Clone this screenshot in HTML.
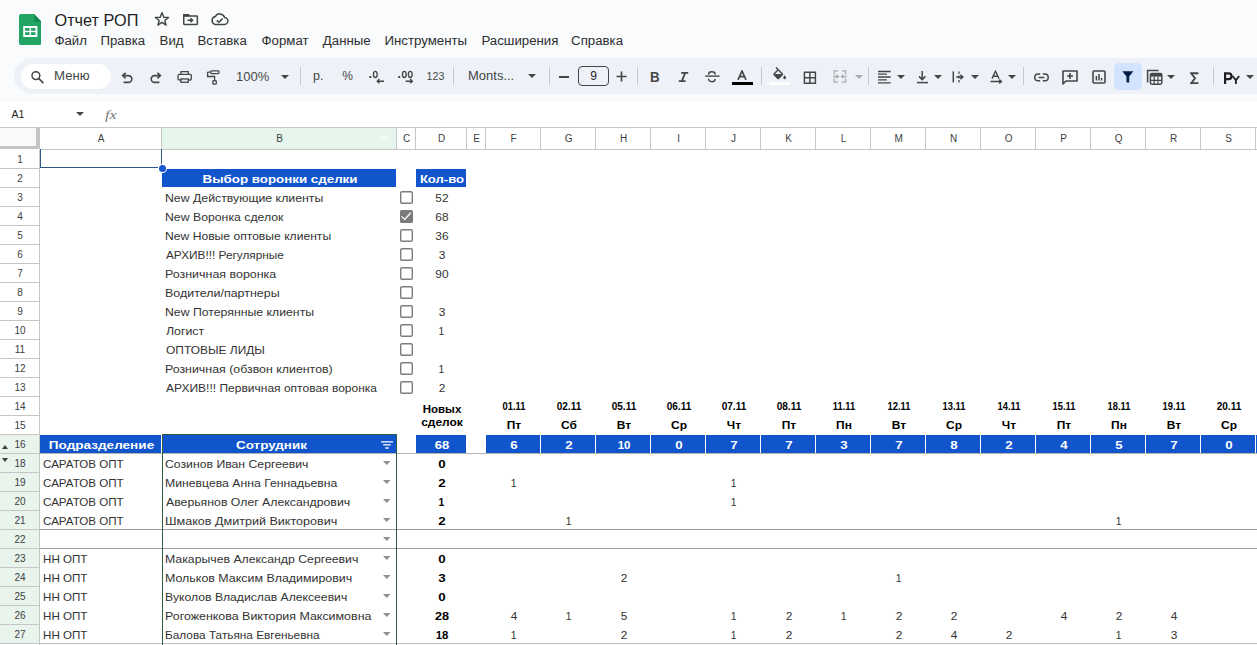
<!DOCTYPE html>
<html><head><meta charset="utf-8"><title>Отчет РОП</title>
<style>
html,body{margin:0;padding:0;}
body{width:1257px;height:645px;overflow:hidden;position:relative;background:#fff;font-family:"Liberation Sans", sans-serif;}
body>div,body>svg{position:absolute;}
.t{white-space:nowrap;}
</style></head><body>
<div style="left:0px;top:0px;width:1257px;height:102px;background:#f9fbfd;"></div>
<svg style="left:18.8px;top:14px" width="22.6" height="31" viewBox="0 0 24 31" preserveAspectRatio="none">
<path d="M2 0 H16 L24 8 V29 A2 2 0 0 1 22 31 H2 A2 2 0 0 1 0 29 V2 A2 2 0 0 1 2 0Z" fill="#21a464"/>
<path d="M16 0 L24 8 H17.5 A1.5 1.5 0 0 1 16 6.5Z" fill="#168a4e"/>
<rect x="4.5" y="12" width="15" height="11" fill="#fff"/>
<rect x="6.5" y="14" width="4.8" height="2.8" fill="#23a566"/>
<rect x="12.7" y="14" width="4.8" height="2.8" fill="#23a566"/>
<rect x="6.5" y="18.2" width="4.8" height="2.8" fill="#23a566"/>
<rect x="12.7" y="18.2" width="4.8" height="2.8" fill="#23a566"/>
</svg>
<div class="t" style="left:54.5px;top:12.00px;font-size:16.3px;line-height:16.3px;color:#1f1f1f;">Отчет РОП</div>
<svg style="left:154px;top:11px" width="16" height="16" viewBox="0 0 16 16"><path d="M8 1.6 L9.75 6.2 L14.6 6.4 L10.8 9.45 L12.1 14.2 L8 11.45 L3.9 14.2 L5.2 9.45 L1.4 6.4 L6.25 6.2Z" fill="none" stroke="#444746" stroke-width="1.4" stroke-linejoin="round"/></svg>
<svg style="left:182px;top:12px" width="17" height="14" viewBox="0 0 17 14"><path d="M1 2 H6.8 L8.6 4.2 H1Z" fill="#444746"/><rect x="1.75" y="4" width="13.6" height="8.4" rx="0.6" fill="none" stroke="#444746" stroke-width="1.5"/><path d="M5.4 8.2 H10.2 M8.4 6.2 L10.6 8.2 L8.4 10.2" fill="none" stroke="#444746" stroke-width="1.5"/></svg>
<svg style="left:210px;top:12px" width="19" height="15" viewBox="0 0 19 15"><path d="M5.2 12.4 H14.4 A3.4 3.4 0 0 0 14.6 5.6 A5 5 0 0 0 5.3 4.6 A4 4 0 0 0 5.2 12.4Z" fill="none" stroke="#444746" stroke-width="1.5"/><path d="M6.8 8.4 L8.8 10.3 L12.6 6.6" fill="none" stroke="#444746" stroke-width="1.5"/></svg>
<div class="t" style="left:54.4px;top:34.00px;font-size:13.25px;line-height:13.25px;color:#2d2d2d;">Файл</div>
<div class="t" style="left:100.39999999999999px;top:34.00px;font-size:13.25px;line-height:13.25px;color:#2d2d2d;">Правка</div>
<div class="t" style="left:159.6px;top:34.00px;font-size:13.25px;line-height:13.25px;color:#2d2d2d;">Вид</div>
<div class="t" style="left:197.5px;top:34.00px;font-size:13.25px;line-height:13.25px;color:#2d2d2d;">Вставка</div>
<div class="t" style="left:261.5px;top:34.00px;font-size:13.25px;line-height:13.25px;color:#2d2d2d;">Формат</div>
<div class="t" style="left:322.8px;top:34.00px;font-size:13.25px;line-height:13.25px;color:#2d2d2d;">Данные</div>
<div class="t" style="left:384.5px;top:34.00px;font-size:13.25px;line-height:13.25px;color:#2d2d2d;">Инструменты</div>
<div class="t" style="left:481.40000000000003px;top:34.00px;font-size:13.25px;line-height:13.25px;color:#2d2d2d;">Расширения</div>
<div class="t" style="left:571.1px;top:34.00px;font-size:13.25px;line-height:13.25px;color:#2d2d2d;">Справка</div>
<div style="left:14px;top:58px;width:1300px;height:36px;background:#eef2f8;border-radius:18px;"></div>
<div style="left:21px;top:64px;width:90px;height:25px;background:#ffffff;border-radius:12.5px;"></div>
<svg style="left:30px;top:70px" width="16" height="14" viewBox="0 0 16 14"><circle cx="5.9" cy="5.6" r="3.9" fill="none" stroke="#444746" stroke-width="1.5"/><path d="M8.7 8.4 L13.4 13.1" stroke="#444746" stroke-width="1.6"/></svg>
<div class="t" style="left:54px;top:70.00px;font-size:12.6px;line-height:12.6px;color:#444746;transform:scaleX(1.05);transform-origin:0 0;">Меню</div>
<svg style="left:120px;top:71px" width="14" height="13" viewBox="0 0 14 13"><path d="M3.2 4.6 H8.4 A3.4 3.4 0 0 1 8.4 11.4 H3.6" fill="none" stroke="#444746" stroke-width="1.6"/><path d="M5.6 1.8 L2.6 4.6 L5.6 7.4" fill="none" stroke="#444746" stroke-width="1.6"/></svg>
<svg style="left:149px;top:71px" width="14" height="13" viewBox="0 0 14 13"><path d="M10.8 4.6 H5.6 A3.4 3.4 0 0 0 5.6 11.4 H10.4" fill="none" stroke="#444746" stroke-width="1.6"/><path d="M8.4 1.8 L11.4 4.6 L8.4 7.4" fill="none" stroke="#444746" stroke-width="1.6"/></svg>
<svg style="left:176px;top:70px" width="18" height="14" viewBox="0 0 18 14"><path d="M4.95 4.3 V1.55 H12.25 V4.3" fill="none" stroke="#444746" stroke-width="1.3"/><rect x="2.05" y="4.4" width="13.3" height="5.6" rx="1.3" fill="none" stroke="#444746" stroke-width="1.3"/><rect x="4.95" y="8.95" width="7.3" height="3.3" fill="#eef2f8" stroke="#444746" stroke-width="1.3"/></svg>
<svg style="left:205px;top:69px" width="16" height="17" viewBox="0 0 16 17"><rect x="5.75" y="1.85" width="8.2" height="2.7" rx="0.8" fill="none" stroke="#444746" stroke-width="1.3"/><path d="M5.1 3.1 H3.3 Q2.6 3.1 2.6 3.8 V7.5 H9.6 V11.5" fill="none" stroke="#444746" stroke-width="1.3"/><rect x="7.85" y="11.6" width="3.4" height="3.6" rx="0.7" fill="none" stroke="#444746" stroke-width="1.3"/></svg>
<div class="t" style="left:236px;top:70.00px;font-size:13px;line-height:13px;color:#444746;">100%</div>
<svg style="left:281.0px;top:75.2px" width="8" height="4" viewBox="0 0 8 4"><path d="M0 0 H8 L4.0 4Z" fill="#444746"/></svg>
<div style="left:300px;top:67px;width:1px;height:18px;background:#c7c7c7;"></div>
<div class="t" style="left:313px;top:70.00px;font-size:12.5px;line-height:12.5px;color:#444746;">р.</div>
<div class="t" style="left:342.2px;top:70.00px;font-size:12px;line-height:12px;color:#444746;">%</div>
<svg style="left:368px;top:69px" width="18" height="16" viewBox="0 0 18 16"><rect x="1.4" y="7" width="2" height="2" fill="#444746"/><ellipse cx="7.3" cy="5.4" rx="1.85" ry="3.1" fill="none" stroke="#444746" stroke-width="1.35"/><path d="M9.4 12.2 H16 M11.4 10.1 L9.3 12.2 L11.4 14.3" fill="none" stroke="#444746" stroke-width="1.4"/></svg>
<svg style="left:397px;top:69px" width="18" height="16" viewBox="0 0 18 16"><rect x="1.2" y="7" width="2" height="2" fill="#444746"/><ellipse cx="7.3" cy="5.4" rx="1.85" ry="3.1" fill="none" stroke="#444746" stroke-width="1.35"/><ellipse cx="13.2" cy="5.4" rx="1.85" ry="3.1" fill="none" stroke="#444746" stroke-width="1.35"/><path d="M8.6 12.2 H15.2 M13.2 10.1 L15.3 12.2 L13.2 14.3" fill="none" stroke="#444746" stroke-width="1.4"/></svg>
<div class="t" style="left:426.5px;top:71.00px;font-size:10.7px;line-height:10.7px;color:#444746;">123</div>
<div style="left:453px;top:67px;width:1px;height:18px;background:#c7c7c7;"></div>
<div class="t" style="left:468px;top:69.00px;font-size:13px;line-height:13px;color:#444746;">Monts...</div>
<svg style="left:528.0px;top:74.0px" width="8" height="4" viewBox="0 0 8 4"><path d="M0 0 H8 L4.0 4Z" fill="#444746"/></svg>
<div style="left:549px;top:67px;width:1px;height:18px;background:#c7c7c7;"></div>
<div style="left:559px;top:76px;width:10px;height:1.6px;background:#444746;"></div>
<div style="left:578px;top:66px;width:31px;height:20px;background:transparent;border:1px solid #444746;border-radius:4px;box-sizing:border-box;"></div>
<div class="t" style="left:578px;top:70.00px;font-size:12px;line-height:12px;color:#1f1f1f;width:31px;text-align:center;">9</div>
<svg style="left:616px;top:71px" width="11" height="11" viewBox="0 0 11 11"><path d="M5.5 0.5 V10.5 M0.5 5.5 H10.5" stroke="#444746" stroke-width="1.7"/></svg>
<div style="left:637px;top:67px;width:1px;height:18px;background:#c7c7c7;"></div>
<div class="t" style="left:650px;top:70.00px;font-size:14.5px;line-height:14.5px;color:#444746;font-weight:700;transform:scaleX(0.92);transform-origin:0 0;">B</div>
<svg style="left:678px;top:71px" width="11" height="12" viewBox="0 0 11 12"><path d="M3.2 1.8 H10.2 M0.8 10.2 H7.6 M7.2 1.8 L3.8 10.2" fill="none" stroke="#444746" stroke-width="1.8"/></svg>
<svg style="left:703px;top:71px" width="18" height="13" viewBox="0 0 18 13"><path d="M2.2 5.1 H16.6" stroke="#444746" stroke-width="1.4"/><path d="M5.6 3.4 A3.3 2.6 0 0 1 12.2 3.4 M5.6 7.8 A3.3 2.8 0 0 0 12.2 8" fill="none" stroke="#444746" stroke-width="1.5"/></svg>
<svg style="left:737px;top:70px" width="10" height="10" viewBox="0 0 10 10"><path d="M1 9.8 L5 1 L9 9.8 M2.6 6.6 H7.4" fill="none" stroke="#444746" stroke-width="1.7"/></svg>
<div style="left:732px;top:82px;width:21px;height:3px;background:#000;"></div>
<div style="left:761px;top:67px;width:1px;height:18px;background:#c7c7c7;"></div>
<svg style="left:771px;top:66.5px" width="17" height="13" viewBox="0 0 17 13"><g transform="scale(0.72)"><path d="M16.56 8.94L7.62 0 6.21 1.41l2.38 2.38-5.15 5.15c-.59.59-.59 1.54 0 2.12l5.5 5.5c.29.29.68.44 1.06.44s.77-.15 1.06-.44l5.5-5.5c.59-.58.59-1.53 0-2.12zM5.21 10L10 5.21 14.79 10H5.21zM19 11.5s-2 2.17-2 3.5c0 1.1.9 2 2 2s2-.9 2-2c0-1.33-2-3.5-2-3.5z" fill="#444746"/><path d="M4.6 10.2 H15.4 L10 15.6Z" fill="#444746"/></g></svg>
<div style="left:769px;top:82px;width:21px;height:3px;background:#ffffff;"></div>
<svg style="left:803px;top:70.5px" width="14" height="14" viewBox="0 0 14 14"><path d="M1.4 1.2 H12.4 V12.2 H1.4Z M6.9 1.2 V12.2 M1.4 6.7 H12.4" fill="none" stroke="#444746" stroke-width="1.5"/></svg>
<svg style="left:832px;top:70px" width="16" height="13" viewBox="0 0 16 13"><path d="M6 0.9 H2.2 V4.4 M2.2 8.6 V12.2 H6 M9.8 0.9 H13.6 V4.4 M13.6 8.6 V12.2 H9.8" fill="none" stroke="#a9abad" stroke-width="1.3"/><path d="M1 6.5 H6.4 M4.5 4.6 L6.4 6.5 L4.5 8.4 M14.8 6.5 H9.4 M11.3 4.6 L9.4 6.5 L11.3 8.4" fill="none" stroke="#a9abad" stroke-width="1.3"/></svg>
<svg style="left:855.0px;top:74.9px" width="8" height="4" viewBox="0 0 8 4"><path d="M0 0 H8 L4.0 4Z" fill="#a9abad"/></svg>
<div style="left:868px;top:67px;width:1px;height:18px;background:#c7c7c7;"></div>
<svg style="left:877px;top:70px" width="15" height="14" viewBox="0 0 15 14"><path d="M1 1.5 H13.7 M1 4.2 H9.9 M1 7 H13.7 M1 9.9 H9.9 M1 12.8 H13.7" stroke="#444746" stroke-width="1.3"/></svg>
<svg style="left:897.0px;top:74.9px" width="8" height="4" viewBox="0 0 8 4"><path d="M0 0 H8 L4.0 4Z" fill="#444746"/></svg>
<svg style="left:916px;top:70px" width="13" height="14" viewBox="0 0 13 14"><path d="M6.2 1 V9.4 M3 6.4 L6.2 9.6 L9.4 6.4" fill="none" stroke="#444746" stroke-width="1.5"/><path d="M1 12.6 H12" stroke="#444746" stroke-width="1.5"/></svg>
<svg style="left:934.0px;top:74.9px" width="8" height="4" viewBox="0 0 8 4"><path d="M0 0 H8 L4.0 4Z" fill="#444746"/></svg>
<svg style="left:952px;top:70px" width="13" height="14" viewBox="0 0 13 14"><path d="M1.3 1.4 V12.4" stroke="#444746" stroke-width="1.5"/><path d="M7 1.4 V3.8 M7 5.4 V8.4 M7 10 V12.4" stroke="#444746" stroke-width="1.3"/><path d="M4.2 7 H10.6 M8.4 4.9 L10.8 7 L8.4 9.1" fill="none" stroke="#444746" stroke-width="1.5"/></svg>
<svg style="left:971.0px;top:74.9px" width="8" height="4" viewBox="0 0 8 4"><path d="M0 0 H8 L4.0 4Z" fill="#444746"/></svg>
<svg style="left:989px;top:70px" width="14" height="15" viewBox="0 0 14 15"><path d="M3 8.6 L6.5 1.2 L10 8.6 M4.1 6.2 H8.9" fill="none" stroke="#444746" stroke-width="1.4"/><path d="M1.5 11.5 H12.2 M10.2 9.6 L12.4 11.5 L10.2 13.4" fill="none" stroke="#444746" stroke-width="1.5"/></svg>
<svg style="left:1008.0px;top:74.9px" width="8" height="4" viewBox="0 0 8 4"><path d="M0 0 H8 L4.0 4Z" fill="#444746"/></svg>
<div style="left:1023px;top:67px;width:1px;height:18px;background:#c7c7c7;"></div>
<svg style="left:1033.5px;top:73px" width="15" height="9.5" viewBox="0 0 15 9.5"><path d="M6.2 1.1 H4.1 A3.3 3.3 0 0 0 4.1 7.7 H6.2 M8.8 1.1 H10.9 A3.3 3.3 0 0 1 10.9 7.7 H8.8 M4.6 4.4 H10.4" fill="none" stroke="#444746" stroke-width="1.5"/></svg>
<svg style="left:1062px;top:70px" width="16" height="15" viewBox="0 0 16 15"><path d="M1 1 H15 V11 H4 L1 14Z" fill="none" stroke="#444746" stroke-width="1.6" stroke-linejoin="round"/><path d="M8 3 V9 M5 6 H11" stroke="#444746" stroke-width="1.6"/></svg>
<svg style="left:1092px;top:70px" width="14" height="14" viewBox="0 0 14 14"><rect x="1" y="1" width="12" height="12" rx="1" fill="none" stroke="#444746" stroke-width="1.6"/><path d="M4.4 6 V10.6 M7 4 V10.6 M9.6 8 V10.6" stroke="#444746" stroke-width="1.5"/></svg>
<div style="left:1114px;top:63px;width:28px;height:27px;background:#d3e3fd;border-radius:5px;"></div>
<svg style="left:1122px;top:71px" width="12" height="12" viewBox="0 0 12 12"><path d="M0.3 0.3 H11.4 L7.2 5.6 V11.6 H4.5 V5.6Z" fill="#041e49"/></svg>
<svg style="left:1146px;top:69px" width="18" height="17" viewBox="0 0 18 17"><path d="M1.6 13.6 V1.6 H12.6" fill="none" stroke="#444746" stroke-width="1.5"/><rect x="4.4" y="4.4" width="11.4" height="10.8" rx="1.6" fill="none" stroke="#444746" stroke-width="1.5"/><rect x="4.4" y="4.4" width="11.4" height="3.2" fill="#444746"/><path d="M4.4 11.3 H15.8 M8.2 7.6 V15.2 M12 7.6 V15.2" stroke="#444746" stroke-width="1.2"/></svg>
<svg style="left:1167.0px;top:74.9px" width="8" height="4" viewBox="0 0 8 4"><path d="M0 0 H8 L4.0 4Z" fill="#444746"/></svg>
<svg style="left:1190px;top:71.5px" width="9" height="12" viewBox="0 0 9 12"><path d="M8.4 1.2 H1.2 L5 6.2 L1.2 11.2 H8.4" fill="none" stroke="#444746" stroke-width="1.9"/></svg>
<div style="left:1213px;top:67px;width:1px;height:18px;background:#c7c7c7;"></div>
<svg style="left:1223px;top:72px" width="18" height="13" viewBox="0 0 18 13"><path d="M2.1 12 V1.4 H5.6 A2.9 2.9 0 0 1 5.6 7.2 H2.1" fill="none" stroke="#1f1f1f" stroke-width="2.2"/><path d="M9.6 4 L12.9 8.2 L16.2 4 M12.9 8.2 V12" fill="none" stroke="#1f1f1f" stroke-width="1.8"/></svg>
<svg style="left:1246.0px;top:74.9px" width="8" height="4" viewBox="0 0 8 4"><path d="M0 0 H8 L4.0 4Z" fill="#444746"/></svg>
<div style="left:0px;top:102px;width:1257px;height:25px;background:#ffffff;"></div>
<div style="left:0px;top:127px;width:1257px;height:1px;background:#c7c7c7;"></div>
<div class="t" style="left:11.5px;top:109.00px;font-size:10.6px;line-height:10.6px;color:#1f1f1f;">A1</div>
<svg style="left:76.0px;top:112.0px" width="8" height="4" viewBox="0 0 8 4"><path d="M0 0 H8 L4.0 4Z" fill="#444746"/></svg>
<div class="t" style="left:104.5px;top:108.00px;font-size:13.5px;line-height:13.5px;color:#7a7a7a;transform:scaleX(1.2);transform-origin:0 0;font-family:'Liberation Serif', serif;font-style:italic;">fx</div>
<div style="left:0px;top:128px;width:1257px;height:517px;background:#ffffff;"></div>
<div style="left:0px;top:128px;width:36px;height:18px;background:#f8f9fa;"></div>
<div style="left:36px;top:128px;width:4px;height:21px;background:#c4c4c4;"></div>
<div style="left:0px;top:146px;width:40px;height:3px;background:#c4c4c4;"></div>
<div style="left:162px;top:128px;width:234px;height:21px;background:#e6f6ec;"></div>
<div style="left:40px;top:149px;width:1217px;height:1px;background:#c4c7c5;"></div>
<svg style="left:379.5px;top:136.0px" width="8" height="4" viewBox="0 0 8 4"><path d="M0 0 H8 L4.0 4Z" fill="#f4fbf6"/></svg>
<div style="left:161px;top:128px;width:1px;height:21px;background:#c4c7c5;"></div>
<div class="t" style="left:40.6px;top:134.00px;font-size:10.0px;line-height:10.0px;color:#3c4043;width:121px;text-align:center;">A</div>
<div style="left:396px;top:128px;width:1px;height:21px;background:#c4c7c5;"></div>
<div class="t" style="left:162.6px;top:134.00px;font-size:10.0px;line-height:10.0px;color:#3c4043;width:234px;text-align:center;">B</div>
<div style="left:415px;top:128px;width:1px;height:21px;background:#c4c7c5;"></div>
<div class="t" style="left:397.6px;top:134.00px;font-size:10.0px;line-height:10.0px;color:#3c4043;width:18px;text-align:center;">C</div>
<div style="left:466px;top:128px;width:1px;height:21px;background:#c4c7c5;"></div>
<div class="t" style="left:416.6px;top:134.00px;font-size:10.0px;line-height:10.0px;color:#3c4043;width:50px;text-align:center;">D</div>
<div style="left:485px;top:128px;width:1px;height:21px;background:#c4c7c5;"></div>
<div class="t" style="left:467.6px;top:134.00px;font-size:10.0px;line-height:10.0px;color:#3c4043;width:18px;text-align:center;">E</div>
<div style="left:540px;top:128px;width:1px;height:21px;background:#c4c7c5;"></div>
<div class="t" style="left:486.6px;top:134.00px;font-size:10.0px;line-height:10.0px;color:#3c4043;width:54px;text-align:center;">F</div>
<div style="left:595px;top:128px;width:1px;height:21px;background:#c4c7c5;"></div>
<div class="t" style="left:541.6px;top:134.00px;font-size:10.0px;line-height:10.0px;color:#3c4043;width:54px;text-align:center;">G</div>
<div style="left:650px;top:128px;width:1px;height:21px;background:#c4c7c5;"></div>
<div class="t" style="left:596.6px;top:134.00px;font-size:10.0px;line-height:10.0px;color:#3c4043;width:54px;text-align:center;">H</div>
<div style="left:705px;top:128px;width:1px;height:21px;background:#c4c7c5;"></div>
<div class="t" style="left:651.6px;top:134.00px;font-size:10.0px;line-height:10.0px;color:#3c4043;width:54px;text-align:center;">I</div>
<div style="left:760px;top:128px;width:1px;height:21px;background:#c4c7c5;"></div>
<div class="t" style="left:706.6px;top:134.00px;font-size:10.0px;line-height:10.0px;color:#3c4043;width:54px;text-align:center;">J</div>
<div style="left:815px;top:128px;width:1px;height:21px;background:#c4c7c5;"></div>
<div class="t" style="left:761.6px;top:134.00px;font-size:10.0px;line-height:10.0px;color:#3c4043;width:54px;text-align:center;">K</div>
<div style="left:870px;top:128px;width:1px;height:21px;background:#c4c7c5;"></div>
<div class="t" style="left:816.6px;top:134.00px;font-size:10.0px;line-height:10.0px;color:#3c4043;width:54px;text-align:center;">L</div>
<div style="left:925px;top:128px;width:1px;height:21px;background:#c4c7c5;"></div>
<div class="t" style="left:871.6px;top:134.00px;font-size:10.0px;line-height:10.0px;color:#3c4043;width:54px;text-align:center;">M</div>
<div style="left:980px;top:128px;width:1px;height:21px;background:#c4c7c5;"></div>
<div class="t" style="left:926.6px;top:134.00px;font-size:10.0px;line-height:10.0px;color:#3c4043;width:54px;text-align:center;">N</div>
<div style="left:1035px;top:128px;width:1px;height:21px;background:#c4c7c5;"></div>
<div class="t" style="left:981.6px;top:134.00px;font-size:10.0px;line-height:10.0px;color:#3c4043;width:54px;text-align:center;">O</div>
<div style="left:1090px;top:128px;width:1px;height:21px;background:#c4c7c5;"></div>
<div class="t" style="left:1036.6px;top:134.00px;font-size:10.0px;line-height:10.0px;color:#3c4043;width:54px;text-align:center;">P</div>
<div style="left:1145px;top:128px;width:1px;height:21px;background:#c4c7c5;"></div>
<div class="t" style="left:1091.6px;top:134.00px;font-size:10.0px;line-height:10.0px;color:#3c4043;width:54px;text-align:center;">Q</div>
<div style="left:1200px;top:128px;width:1px;height:21px;background:#c4c7c5;"></div>
<div class="t" style="left:1146.6px;top:134.00px;font-size:10.0px;line-height:10.0px;color:#3c4043;width:54px;text-align:center;">R</div>
<div style="left:1255px;top:128px;width:1px;height:21px;background:#c4c7c5;"></div>
<div class="t" style="left:1201.6px;top:134.00px;font-size:10.0px;line-height:10.0px;color:#3c4043;width:54px;text-align:center;">S</div>
<div style="left:0px;top:168px;width:39px;height:1px;background:#c6c6c6;"></div>
<div class="t" style="left:0.5px;top:155.00px;font-size:10px;line-height:10px;color:#3c4043;width:39px;text-align:center;">1</div>
<div style="left:0px;top:187px;width:39px;height:1px;background:#c6c6c6;"></div>
<div class="t" style="left:0.5px;top:174.00px;font-size:10px;line-height:10px;color:#3c4043;width:39px;text-align:center;">2</div>
<div style="left:0px;top:206px;width:39px;height:1px;background:#c6c6c6;"></div>
<div class="t" style="left:0.5px;top:193.00px;font-size:10px;line-height:10px;color:#3c4043;width:39px;text-align:center;">3</div>
<div style="left:0px;top:225px;width:39px;height:1px;background:#c6c6c6;"></div>
<div class="t" style="left:0.5px;top:212.00px;font-size:10px;line-height:10px;color:#3c4043;width:39px;text-align:center;">4</div>
<div style="left:0px;top:244px;width:39px;height:1px;background:#c6c6c6;"></div>
<div class="t" style="left:0.5px;top:231.00px;font-size:10px;line-height:10px;color:#3c4043;width:39px;text-align:center;">5</div>
<div style="left:0px;top:263px;width:39px;height:1px;background:#c6c6c6;"></div>
<div class="t" style="left:0.5px;top:250.00px;font-size:10px;line-height:10px;color:#3c4043;width:39px;text-align:center;">6</div>
<div style="left:0px;top:282px;width:39px;height:1px;background:#c6c6c6;"></div>
<div class="t" style="left:0.5px;top:269.00px;font-size:10px;line-height:10px;color:#3c4043;width:39px;text-align:center;">7</div>
<div style="left:0px;top:301px;width:39px;height:1px;background:#c6c6c6;"></div>
<div class="t" style="left:0.5px;top:288.00px;font-size:10px;line-height:10px;color:#3c4043;width:39px;text-align:center;">8</div>
<div style="left:0px;top:320px;width:39px;height:1px;background:#c6c6c6;"></div>
<div class="t" style="left:0.5px;top:307.00px;font-size:10px;line-height:10px;color:#3c4043;width:39px;text-align:center;">9</div>
<div style="left:0px;top:339px;width:39px;height:1px;background:#c6c6c6;"></div>
<div class="t" style="left:0.5px;top:326.00px;font-size:10px;line-height:10px;color:#3c4043;width:39px;text-align:center;">10</div>
<div style="left:0px;top:358px;width:39px;height:1px;background:#c6c6c6;"></div>
<div class="t" style="left:0.5px;top:345.00px;font-size:10px;line-height:10px;color:#3c4043;width:39px;text-align:center;">11</div>
<div style="left:0px;top:377px;width:39px;height:1px;background:#c6c6c6;"></div>
<div class="t" style="left:0.5px;top:364.00px;font-size:10px;line-height:10px;color:#3c4043;width:39px;text-align:center;">12</div>
<div style="left:0px;top:396px;width:39px;height:1px;background:#c6c6c6;"></div>
<div class="t" style="left:0.5px;top:383.00px;font-size:10px;line-height:10px;color:#3c4043;width:39px;text-align:center;">13</div>
<div style="left:0px;top:415px;width:39px;height:1px;background:#c6c6c6;"></div>
<div class="t" style="left:0.5px;top:402.00px;font-size:10px;line-height:10px;color:#3c4043;width:39px;text-align:center;">14</div>
<div style="left:0px;top:434px;width:39px;height:1px;background:#c6c6c6;"></div>
<div class="t" style="left:0.5px;top:421.00px;font-size:10px;line-height:10px;color:#3c4043;width:39px;text-align:center;">15</div>
<div style="left:0px;top:435px;width:39px;height:18px;background:#e8f4ec;"></div>
<div style="left:0px;top:453px;width:39px;height:1px;background:#c6c6c6;"></div>
<div class="t" style="left:0.5px;top:440.00px;font-size:10px;line-height:10px;color:#3c4043;width:39px;text-align:center;">16</div>
<div style="left:0px;top:454px;width:39px;height:18px;background:#e8f4ec;"></div>
<div style="left:0px;top:472px;width:39px;height:1px;background:#c6c6c6;"></div>
<div class="t" style="left:0.5px;top:459.00px;font-size:10px;line-height:10px;color:#3c4043;width:39px;text-align:center;">18</div>
<div style="left:0px;top:473px;width:39px;height:18px;background:#e8f4ec;"></div>
<div style="left:0px;top:491px;width:39px;height:1px;background:#c6c6c6;"></div>
<div class="t" style="left:0.5px;top:478.00px;font-size:10px;line-height:10px;color:#3c4043;width:39px;text-align:center;">19</div>
<div style="left:0px;top:492px;width:39px;height:18px;background:#e8f4ec;"></div>
<div style="left:0px;top:510px;width:39px;height:1px;background:#c6c6c6;"></div>
<div class="t" style="left:0.5px;top:497.00px;font-size:10px;line-height:10px;color:#3c4043;width:39px;text-align:center;">20</div>
<div style="left:0px;top:511px;width:39px;height:18px;background:#e8f4ec;"></div>
<div style="left:0px;top:529px;width:39px;height:1px;background:#c6c6c6;"></div>
<div class="t" style="left:0.5px;top:516.00px;font-size:10px;line-height:10px;color:#3c4043;width:39px;text-align:center;">21</div>
<div style="left:0px;top:530px;width:39px;height:18px;background:#e8f4ec;"></div>
<div style="left:0px;top:548px;width:39px;height:1px;background:#c6c6c6;"></div>
<div class="t" style="left:0.5px;top:535.00px;font-size:10px;line-height:10px;color:#3c4043;width:39px;text-align:center;">22</div>
<div style="left:0px;top:549px;width:39px;height:18px;background:#e8f4ec;"></div>
<div style="left:0px;top:567px;width:39px;height:1px;background:#c6c6c6;"></div>
<div class="t" style="left:0.5px;top:554.00px;font-size:10px;line-height:10px;color:#3c4043;width:39px;text-align:center;">23</div>
<div style="left:0px;top:568px;width:39px;height:18px;background:#e8f4ec;"></div>
<div style="left:0px;top:586px;width:39px;height:1px;background:#c6c6c6;"></div>
<div class="t" style="left:0.5px;top:573.00px;font-size:10px;line-height:10px;color:#3c4043;width:39px;text-align:center;">24</div>
<div style="left:0px;top:587px;width:39px;height:18px;background:#e8f4ec;"></div>
<div style="left:0px;top:605px;width:39px;height:1px;background:#c6c6c6;"></div>
<div class="t" style="left:0.5px;top:592.00px;font-size:10px;line-height:10px;color:#3c4043;width:39px;text-align:center;">25</div>
<div style="left:0px;top:606px;width:39px;height:18px;background:#e8f4ec;"></div>
<div style="left:0px;top:624px;width:39px;height:1px;background:#c6c6c6;"></div>
<div class="t" style="left:0.5px;top:611.00px;font-size:10px;line-height:10px;color:#3c4043;width:39px;text-align:center;">26</div>
<div style="left:0px;top:625px;width:39px;height:18px;background:#e8f4ec;"></div>
<div style="left:0px;top:643px;width:39px;height:1px;background:#c6c6c6;"></div>
<div class="t" style="left:0.5px;top:630.00px;font-size:10px;line-height:10px;color:#3c4043;width:39px;text-align:center;">27</div>
<div style="left:39px;top:150px;width:1px;height:495px;background:#c4c7c5;"></div>
<svg style="left:2px;top:445px" width="6" height="4" viewBox="0 0 6 4"><path d="M0 4 H6 L3 0Z" fill="#3c4043"/></svg>
<svg style="left:2px;top:458px" width="6" height="4" viewBox="0 0 6 4"><path d="M0 0 H6 L3 4Z" fill="#3c4043"/></svg>
<div style="left:162px;top:169px;width:234px;height:18px;background:#1155cc;"></div>
<div class="t" style="left:162.5px;top:173.00px;font-size:11.6px;line-height:11.6px;color:#ffffff;font-weight:700;width:234px;text-align:center;transform:scaleX(1.15);transform-origin:50% 0;">Выбор воронки сделки</div>
<div style="left:416px;top:169px;width:50px;height:18px;background:#1155cc;"></div>
<div class="t" style="left:416.5px;top:173.00px;font-size:11.6px;line-height:11.6px;color:#ffffff;font-weight:700;width:50px;text-align:center;transform:scaleX(1.13);transform-origin:50% 0;">Кол-во</div>
<div class="t" style="left:165.17px;top:194.00px;font-size:10.35px;line-height:10.35px;color:#333333;transform:scaleX(1.1878);transform-origin:0 0;">New Действующие клиенты</div>
<div class="t" style="left:416.5px;top:194.00px;font-size:10.35px;line-height:10.35px;color:#333333;width:50px;text-align:center;transform:scaleX(1.15);transform-origin:50% 0;">52</div>
<svg style="left:400px;top:191px" width="13" height="13" viewBox="0 0 13 13"><rect x="0.7" y="0.7" width="11.6" height="11.6" rx="1.4" fill="none" stroke="#7d7d7d" stroke-width="1.4"/></svg>
<div class="t" style="left:165.17px;top:213.00px;font-size:10.35px;line-height:10.35px;color:#333333;transform:scaleX(1.186);transform-origin:0 0;">New Воронка сделок</div>
<div class="t" style="left:416.5px;top:213.00px;font-size:10.35px;line-height:10.35px;color:#333333;width:50px;text-align:center;transform:scaleX(1.15);transform-origin:50% 0;">68</div>
<svg style="left:400px;top:210px" width="13" height="13" viewBox="0 0 13 13"><rect x="0" y="0" width="13" height="13" rx="1.6" fill="#7b7b7b"/><path d="M1.6 6.4 L4.8 9.4 L10.8 2.8" fill="none" stroke="#fff" stroke-width="1.3"/></svg>
<div class="t" style="left:165.18px;top:232.00px;font-size:10.35px;line-height:10.35px;color:#333333;transform:scaleX(1.1723);transform-origin:0 0;">New Новые оптовые клиенты</div>
<div class="t" style="left:416.5px;top:232.00px;font-size:10.35px;line-height:10.35px;color:#333333;width:50px;text-align:center;transform:scaleX(1.15);transform-origin:50% 0;">36</div>
<svg style="left:400px;top:229px" width="13" height="13" viewBox="0 0 13 13"><rect x="0.7" y="0.7" width="11.6" height="11.6" rx="1.4" fill="none" stroke="#7d7d7d" stroke-width="1.4"/></svg>
<div class="t" style="left:166.15px;top:251.00px;font-size:10.35px;line-height:10.35px;color:#333333;transform:scaleX(1.1411);transform-origin:0 0;">АРХИВ!!! Регулярные</div>
<div class="t" style="left:416.5px;top:251.00px;font-size:10.35px;line-height:10.35px;color:#333333;width:50px;text-align:center;transform:scaleX(1.15);transform-origin:50% 0;">3</div>
<svg style="left:400px;top:248px" width="13" height="13" viewBox="0 0 13 13"><rect x="0.7" y="0.7" width="11.6" height="11.6" rx="1.4" fill="none" stroke="#7d7d7d" stroke-width="1.4"/></svg>
<div class="t" style="left:165.15px;top:270.00px;font-size:10.35px;line-height:10.35px;color:#333333;transform:scaleX(1.2028);transform-origin:0 0;">Розничная воронка</div>
<div class="t" style="left:416.5px;top:270.00px;font-size:10.35px;line-height:10.35px;color:#333333;width:50px;text-align:center;transform:scaleX(1.15);transform-origin:50% 0;">90</div>
<svg style="left:400px;top:267px" width="13" height="13" viewBox="0 0 13 13"><rect x="0.7" y="0.7" width="11.6" height="11.6" rx="1.4" fill="none" stroke="#7d7d7d" stroke-width="1.4"/></svg>
<div class="t" style="left:165.15px;top:289.00px;font-size:10.35px;line-height:10.35px;color:#333333;transform:scaleX(1.204);transform-origin:0 0;">Водители/партнеры</div>
<svg style="left:400px;top:286px" width="13" height="13" viewBox="0 0 13 13"><rect x="0.7" y="0.7" width="11.6" height="11.6" rx="1.4" fill="none" stroke="#7d7d7d" stroke-width="1.4"/></svg>
<div class="t" style="left:165.17px;top:308.00px;font-size:10.35px;line-height:10.35px;color:#333333;transform:scaleX(1.1858);transform-origin:0 0;">New Потерянные клиенты</div>
<div class="t" style="left:416.5px;top:308.00px;font-size:10.35px;line-height:10.35px;color:#333333;width:50px;text-align:center;transform:scaleX(1.15);transform-origin:50% 0;">3</div>
<svg style="left:400px;top:305px" width="13" height="13" viewBox="0 0 13 13"><rect x="0.7" y="0.7" width="11.6" height="11.6" rx="1.4" fill="none" stroke="#7d7d7d" stroke-width="1.4"/></svg>
<div class="t" style="left:166.03px;top:327.00px;font-size:10.35px;line-height:10.35px;color:#333333;transform:scaleX(1.1928);transform-origin:0 0;">Логист</div>
<div class="t" style="left:416.5px;top:327.00px;font-size:10.35px;line-height:10.35px;color:#333333;width:50px;text-align:center;">1</div>
<svg style="left:400px;top:324px" width="13" height="13" viewBox="0 0 13 13"><rect x="0.7" y="0.7" width="11.6" height="11.6" rx="1.4" fill="none" stroke="#7d7d7d" stroke-width="1.4"/></svg>
<div class="t" style="left:165.67px;top:346.00px;font-size:10.35px;line-height:10.35px;color:#333333;transform:scaleX(1.1556);transform-origin:0 0;">ОПТОВЫЕ ЛИДЫ</div>
<svg style="left:400px;top:343px" width="13" height="13" viewBox="0 0 13 13"><rect x="0.7" y="0.7" width="11.6" height="11.6" rx="1.4" fill="none" stroke="#7d7d7d" stroke-width="1.4"/></svg>
<div class="t" style="left:165.16px;top:365.00px;font-size:10.35px;line-height:10.35px;color:#333333;transform:scaleX(1.1959);transform-origin:0 0;">Розничная (обзвон клиентов)</div>
<div class="t" style="left:416.5px;top:365.00px;font-size:10.35px;line-height:10.35px;color:#333333;width:50px;text-align:center;">1</div>
<svg style="left:400px;top:362px" width="13" height="13" viewBox="0 0 13 13"><rect x="0.7" y="0.7" width="11.6" height="11.6" rx="1.4" fill="none" stroke="#7d7d7d" stroke-width="1.4"/></svg>
<div class="t" style="left:166.15px;top:384.00px;font-size:10.35px;line-height:10.35px;color:#333333;transform:scaleX(1.1607);transform-origin:0 0;">АРХИВ!!! Первичная оптовая воронка</div>
<div class="t" style="left:416.5px;top:384.00px;font-size:10.35px;line-height:10.35px;color:#333333;width:50px;text-align:center;transform:scaleX(1.15);transform-origin:50% 0;">2</div>
<svg style="left:400px;top:381px" width="13" height="13" viewBox="0 0 13 13"><rect x="0.7" y="0.7" width="11.6" height="11.6" rx="1.4" fill="none" stroke="#7d7d7d" stroke-width="1.4"/></svg>
<div class="t" style="left:416.5px;top:405.00px;font-size:10.4px;line-height:10.4px;color:#000000;font-weight:700;width:50px;text-align:center;transform:scaleX(1.105);transform-origin:50% 0;">Новых</div>
<div class="t" style="left:416.5px;top:418.00px;font-size:10.4px;line-height:10.4px;color:#000000;font-weight:700;width:50px;text-align:center;transform:scaleX(1.15);transform-origin:50% 0;">сделок</div>
<div class="t" style="left:486.75px;top:402.00px;font-size:10.4px;line-height:10.4px;color:#000000;font-weight:700;width:54px;text-align:center;transform:scaleX(0.9);transform-origin:50% 0;">01.11</div>
<div class="t" style="left:486.75px;top:421.00px;font-size:10.4px;line-height:10.4px;color:#000000;font-weight:700;width:54px;text-align:center;transform:scaleX(1.15);transform-origin:50% 0;">Пт</div>
<div style="left:486px;top:435px;width:54px;height:18px;background:#1155cc;"></div>
<div class="t" style="left:486.75px;top:441.00px;font-size:10.4px;line-height:10.4px;color:#ffffff;font-weight:700;width:54px;text-align:center;transform:scaleX(1.28);transform-origin:50% 0;">6</div>
<div class="t" style="left:541.75px;top:402.00px;font-size:10.4px;line-height:10.4px;color:#000000;font-weight:700;width:54px;text-align:center;transform:scaleX(0.97);transform-origin:50% 0;">02.11</div>
<div class="t" style="left:541.75px;top:421.00px;font-size:10.4px;line-height:10.4px;color:#000000;font-weight:700;width:54px;text-align:center;transform:scaleX(1.15);transform-origin:50% 0;">Сб</div>
<div style="left:541px;top:435px;width:54px;height:18px;background:#1155cc;"></div>
<div class="t" style="left:541.75px;top:441.00px;font-size:10.4px;line-height:10.4px;color:#ffffff;font-weight:700;width:54px;text-align:center;transform:scaleX(1.28);transform-origin:50% 0;">2</div>
<div class="t" style="left:596.75px;top:402.00px;font-size:10.4px;line-height:10.4px;color:#000000;font-weight:700;width:54px;text-align:center;transform:scaleX(0.97);transform-origin:50% 0;">05.11</div>
<div class="t" style="left:596.75px;top:421.00px;font-size:10.4px;line-height:10.4px;color:#000000;font-weight:700;width:54px;text-align:center;transform:scaleX(1.15);transform-origin:50% 0;">Вт</div>
<div style="left:596px;top:435px;width:54px;height:18px;background:#1155cc;"></div>
<div class="t" style="left:596.75px;top:441.00px;font-size:10.4px;line-height:10.4px;color:#ffffff;font-weight:700;width:54px;text-align:center;transform:scaleX(1.1);transform-origin:50% 0;">10</div>
<div class="t" style="left:651.75px;top:402.00px;font-size:10.4px;line-height:10.4px;color:#000000;font-weight:700;width:54px;text-align:center;transform:scaleX(0.97);transform-origin:50% 0;">06.11</div>
<div class="t" style="left:651.75px;top:421.00px;font-size:10.4px;line-height:10.4px;color:#000000;font-weight:700;width:54px;text-align:center;transform:scaleX(1.15);transform-origin:50% 0;">Ср</div>
<div style="left:651px;top:435px;width:54px;height:18px;background:#1155cc;"></div>
<div class="t" style="left:651.75px;top:441.00px;font-size:10.4px;line-height:10.4px;color:#ffffff;font-weight:700;width:54px;text-align:center;transform:scaleX(1.28);transform-origin:50% 0;">0</div>
<div class="t" style="left:706.75px;top:402.00px;font-size:10.4px;line-height:10.4px;color:#000000;font-weight:700;width:54px;text-align:center;transform:scaleX(0.97);transform-origin:50% 0;">07.11</div>
<div class="t" style="left:706.75px;top:421.00px;font-size:10.4px;line-height:10.4px;color:#000000;font-weight:700;width:54px;text-align:center;transform:scaleX(1.15);transform-origin:50% 0;">Чт</div>
<div style="left:706px;top:435px;width:54px;height:18px;background:#1155cc;"></div>
<div class="t" style="left:706.75px;top:441.00px;font-size:10.4px;line-height:10.4px;color:#ffffff;font-weight:700;width:54px;text-align:center;transform:scaleX(1.28);transform-origin:50% 0;">7</div>
<div class="t" style="left:761.75px;top:402.00px;font-size:10.4px;line-height:10.4px;color:#000000;font-weight:700;width:54px;text-align:center;transform:scaleX(0.97);transform-origin:50% 0;">08.11</div>
<div class="t" style="left:761.75px;top:421.00px;font-size:10.4px;line-height:10.4px;color:#000000;font-weight:700;width:54px;text-align:center;transform:scaleX(1.15);transform-origin:50% 0;">Пт</div>
<div style="left:761px;top:435px;width:54px;height:18px;background:#1155cc;"></div>
<div class="t" style="left:761.75px;top:441.00px;font-size:10.4px;line-height:10.4px;color:#ffffff;font-weight:700;width:54px;text-align:center;transform:scaleX(1.28);transform-origin:50% 0;">7</div>
<div class="t" style="left:816.75px;top:402.00px;font-size:10.4px;line-height:10.4px;color:#000000;font-weight:700;width:54px;text-align:center;transform:scaleX(0.9);transform-origin:50% 0;">11.11</div>
<div class="t" style="left:816.75px;top:421.00px;font-size:10.4px;line-height:10.4px;color:#000000;font-weight:700;width:54px;text-align:center;transform:scaleX(1.15);transform-origin:50% 0;">Пн</div>
<div style="left:816px;top:435px;width:54px;height:18px;background:#1155cc;"></div>
<div class="t" style="left:816.75px;top:441.00px;font-size:10.4px;line-height:10.4px;color:#ffffff;font-weight:700;width:54px;text-align:center;transform:scaleX(1.28);transform-origin:50% 0;">3</div>
<div class="t" style="left:871.75px;top:402.00px;font-size:10.4px;line-height:10.4px;color:#000000;font-weight:700;width:54px;text-align:center;transform:scaleX(0.9);transform-origin:50% 0;">12.11</div>
<div class="t" style="left:871.75px;top:421.00px;font-size:10.4px;line-height:10.4px;color:#000000;font-weight:700;width:54px;text-align:center;transform:scaleX(1.15);transform-origin:50% 0;">Вт</div>
<div style="left:871px;top:435px;width:54px;height:18px;background:#1155cc;"></div>
<div class="t" style="left:871.75px;top:441.00px;font-size:10.4px;line-height:10.4px;color:#ffffff;font-weight:700;width:54px;text-align:center;transform:scaleX(1.28);transform-origin:50% 0;">7</div>
<div class="t" style="left:926.75px;top:402.00px;font-size:10.4px;line-height:10.4px;color:#000000;font-weight:700;width:54px;text-align:center;transform:scaleX(0.9);transform-origin:50% 0;">13.11</div>
<div class="t" style="left:926.75px;top:421.00px;font-size:10.4px;line-height:10.4px;color:#000000;font-weight:700;width:54px;text-align:center;transform:scaleX(1.15);transform-origin:50% 0;">Ср</div>
<div style="left:926px;top:435px;width:54px;height:18px;background:#1155cc;"></div>
<div class="t" style="left:926.75px;top:441.00px;font-size:10.4px;line-height:10.4px;color:#ffffff;font-weight:700;width:54px;text-align:center;transform:scaleX(1.28);transform-origin:50% 0;">8</div>
<div class="t" style="left:981.75px;top:402.00px;font-size:10.4px;line-height:10.4px;color:#000000;font-weight:700;width:54px;text-align:center;transform:scaleX(0.9);transform-origin:50% 0;">14.11</div>
<div class="t" style="left:981.75px;top:421.00px;font-size:10.4px;line-height:10.4px;color:#000000;font-weight:700;width:54px;text-align:center;transform:scaleX(1.15);transform-origin:50% 0;">Чт</div>
<div style="left:981px;top:435px;width:54px;height:18px;background:#1155cc;"></div>
<div class="t" style="left:981.75px;top:441.00px;font-size:10.4px;line-height:10.4px;color:#ffffff;font-weight:700;width:54px;text-align:center;transform:scaleX(1.28);transform-origin:50% 0;">2</div>
<div class="t" style="left:1036.75px;top:402.00px;font-size:10.4px;line-height:10.4px;color:#000000;font-weight:700;width:54px;text-align:center;transform:scaleX(0.9);transform-origin:50% 0;">15.11</div>
<div class="t" style="left:1036.75px;top:421.00px;font-size:10.4px;line-height:10.4px;color:#000000;font-weight:700;width:54px;text-align:center;transform:scaleX(1.15);transform-origin:50% 0;">Пт</div>
<div style="left:1036px;top:435px;width:54px;height:18px;background:#1155cc;"></div>
<div class="t" style="left:1036.75px;top:441.00px;font-size:10.4px;line-height:10.4px;color:#ffffff;font-weight:700;width:54px;text-align:center;transform:scaleX(1.28);transform-origin:50% 0;">4</div>
<div class="t" style="left:1091.75px;top:402.00px;font-size:10.4px;line-height:10.4px;color:#000000;font-weight:700;width:54px;text-align:center;transform:scaleX(0.9);transform-origin:50% 0;">18.11</div>
<div class="t" style="left:1091.75px;top:421.00px;font-size:10.4px;line-height:10.4px;color:#000000;font-weight:700;width:54px;text-align:center;transform:scaleX(1.15);transform-origin:50% 0;">Пн</div>
<div style="left:1091px;top:435px;width:54px;height:18px;background:#1155cc;"></div>
<div class="t" style="left:1091.75px;top:441.00px;font-size:10.4px;line-height:10.4px;color:#ffffff;font-weight:700;width:54px;text-align:center;transform:scaleX(1.28);transform-origin:50% 0;">5</div>
<div class="t" style="left:1146.75px;top:402.00px;font-size:10.4px;line-height:10.4px;color:#000000;font-weight:700;width:54px;text-align:center;transform:scaleX(0.9);transform-origin:50% 0;">19.11</div>
<div class="t" style="left:1146.75px;top:421.00px;font-size:10.4px;line-height:10.4px;color:#000000;font-weight:700;width:54px;text-align:center;transform:scaleX(1.15);transform-origin:50% 0;">Вт</div>
<div style="left:1146px;top:435px;width:54px;height:18px;background:#1155cc;"></div>
<div class="t" style="left:1146.75px;top:441.00px;font-size:10.4px;line-height:10.4px;color:#ffffff;font-weight:700;width:54px;text-align:center;transform:scaleX(1.28);transform-origin:50% 0;">7</div>
<div class="t" style="left:1201.75px;top:402.00px;font-size:10.4px;line-height:10.4px;color:#000000;font-weight:700;width:54px;text-align:center;transform:scaleX(0.97);transform-origin:50% 0;">20.11</div>
<div class="t" style="left:1201.75px;top:421.00px;font-size:10.4px;line-height:10.4px;color:#000000;font-weight:700;width:54px;text-align:center;transform:scaleX(1.15);transform-origin:50% 0;">Ср</div>
<div style="left:1201px;top:435px;width:54px;height:18px;background:#1155cc;"></div>
<div class="t" style="left:1201.75px;top:441.00px;font-size:10.4px;line-height:10.4px;color:#ffffff;font-weight:700;width:54px;text-align:center;transform:scaleX(1.28);transform-origin:50% 0;">0</div>
<div style="left:1256px;top:435px;width:1px;height:18px;background:#1155cc;"></div>
<div style="left:40px;top:453px;width:1217px;height:1px;background:#b4b4b4;"></div>
<div style="left:40px;top:435px;width:121px;height:18px;background:#1155cc;"></div>
<div class="t" style="left:40.5px;top:439.00px;font-size:11.6px;line-height:11.6px;color:#ffffff;font-weight:700;width:121px;text-align:center;transform:scaleX(1.17);transform-origin:50% 0;">Подразделение</div>
<div style="left:162px;top:435px;width:234px;height:18px;background:#1155cc;"></div>
<div class="t" style="left:162.5px;top:439.00px;font-size:11.6px;line-height:11.6px;color:#ffffff;font-weight:700;width:217px;text-align:center;transform:scaleX(1.16);transform-origin:50% 0;">Сотрудник</div>
<div style="left:416px;top:435px;width:50px;height:18px;background:#1155cc;"></div>
<div class="t" style="left:416.5px;top:441.00px;font-size:10.4px;line-height:10.4px;color:#ffffff;font-weight:700;width:50px;text-align:center;transform:scaleX(1.25);transform-origin:50% 0;">68</div>
<svg style="left:381px;top:441px" width="12" height="8" viewBox="0 0 12 8"><path d="M0 0.8 H12 M2.2 3.9 H9.8 M4.4 7 H7.6" stroke="#fff" stroke-width="1.3"/></svg>
<div class="t" style="left:43.32px;top:460.00px;font-size:10.35px;line-height:10.35px;color:#333333;transform:scaleX(1.1221);transform-origin:0 0;">САРАТОВ ОПТ</div>
<div class="t" style="left:165.44px;top:460.00px;font-size:10.35px;line-height:10.35px;color:#333333;transform:scaleX(1.1826);transform-origin:0 0;">Созинов Иван Сергеевич</div>
<svg style="left:383.25px;top:461.0px" width="7.5" height="4" viewBox="0 0 7.5 4"><path d="M0 0 H7.5 L3.75 4Z" fill="#8f8f8f"/></svg>
<div class="t" style="left:416.5px;top:460.00px;font-size:10.4px;line-height:10.4px;color:#000000;font-weight:700;width:50px;text-align:center;transform:scaleX(1.28);transform-origin:50% 0;">0</div>
<div class="t" style="left:43.32px;top:479.00px;font-size:10.35px;line-height:10.35px;color:#333333;transform:scaleX(1.1221);transform-origin:0 0;">САРАТОВ ОПТ</div>
<div class="t" style="left:165.07px;top:479.00px;font-size:10.35px;line-height:10.35px;color:#333333;transform:scaleX(1.1819);transform-origin:0 0;">Миневцева Анна Геннадьевна</div>
<svg style="left:383.25px;top:480.0px" width="7.5" height="4" viewBox="0 0 7.5 4"><path d="M0 0 H7.5 L3.75 4Z" fill="#8f8f8f"/></svg>
<div class="t" style="left:416.5px;top:479.00px;font-size:10.4px;line-height:10.4px;color:#000000;font-weight:700;width:50px;text-align:center;transform:scaleX(1.28);transform-origin:50% 0;">2</div>
<div class="t" style="left:486.75px;top:479.00px;font-size:10.35px;line-height:10.35px;color:#333333;width:54px;text-align:center;">1</div>
<div class="t" style="left:706.75px;top:479.00px;font-size:10.35px;line-height:10.35px;color:#333333;width:54px;text-align:center;">1</div>
<div class="t" style="left:43.32px;top:498.00px;font-size:10.35px;line-height:10.35px;color:#333333;transform:scaleX(1.1221);transform-origin:0 0;">САРАТОВ ОПТ</div>
<div class="t" style="left:166.05px;top:498.00px;font-size:10.35px;line-height:10.35px;color:#333333;transform:scaleX(1.1869);transform-origin:0 0;">Аверьянов Олег Александрович</div>
<svg style="left:383.25px;top:499.0px" width="7.5" height="4" viewBox="0 0 7.5 4"><path d="M0 0 H7.5 L3.75 4Z" fill="#8f8f8f"/></svg>
<div class="t" style="left:416.5px;top:498.00px;font-size:10.4px;line-height:10.4px;color:#000000;font-weight:700;width:50px;text-align:center;">1</div>
<div class="t" style="left:706.75px;top:498.00px;font-size:10.35px;line-height:10.35px;color:#333333;width:54px;text-align:center;">1</div>
<div class="t" style="left:43.32px;top:517.00px;font-size:10.35px;line-height:10.35px;color:#333333;transform:scaleX(1.1221);transform-origin:0 0;">САРАТОВ ОПТ</div>
<div class="t" style="left:165.04px;top:517.00px;font-size:10.35px;line-height:10.35px;color:#333333;transform:scaleX(1.2156);transform-origin:0 0;">Шмаков Дмитрий Викторович</div>
<svg style="left:383.25px;top:518.0px" width="7.5" height="4" viewBox="0 0 7.5 4"><path d="M0 0 H7.5 L3.75 4Z" fill="#8f8f8f"/></svg>
<div class="t" style="left:416.5px;top:517.00px;font-size:10.4px;line-height:10.4px;color:#000000;font-weight:700;width:50px;text-align:center;transform:scaleX(1.28);transform-origin:50% 0;">2</div>
<div class="t" style="left:541.75px;top:517.00px;font-size:10.35px;line-height:10.35px;color:#333333;width:54px;text-align:center;">1</div>
<div class="t" style="left:1091.75px;top:517.00px;font-size:10.35px;line-height:10.35px;color:#333333;width:54px;text-align:center;">1</div>
<svg style="left:383.25px;top:537.0px" width="7.5" height="4" viewBox="0 0 7.5 4"><path d="M0 0 H7.5 L3.75 4Z" fill="#8f8f8f"/></svg>
<div class="t" style="left:43.37px;top:555.00px;font-size:10.35px;line-height:10.35px;color:#333333;transform:scaleX(1.1216);transform-origin:0 0;">НН ОПТ</div>
<div class="t" style="left:165.07px;top:555.00px;font-size:10.35px;line-height:10.35px;color:#333333;transform:scaleX(1.1859);transform-origin:0 0;">Макарычев Александр Сергеевич</div>
<svg style="left:383.25px;top:556.0px" width="7.5" height="4" viewBox="0 0 7.5 4"><path d="M0 0 H7.5 L3.75 4Z" fill="#8f8f8f"/></svg>
<div class="t" style="left:416.5px;top:555.00px;font-size:10.4px;line-height:10.4px;color:#000000;font-weight:700;width:50px;text-align:center;transform:scaleX(1.28);transform-origin:50% 0;">0</div>
<div class="t" style="left:43.37px;top:574.00px;font-size:10.35px;line-height:10.35px;color:#333333;transform:scaleX(1.1216);transform-origin:0 0;">НН ОПТ</div>
<div class="t" style="left:165.06px;top:574.00px;font-size:10.35px;line-height:10.35px;color:#333333;transform:scaleX(1.1996);transform-origin:0 0;">Мольков Максим Владимирович</div>
<svg style="left:383.25px;top:575.0px" width="7.5" height="4" viewBox="0 0 7.5 4"><path d="M0 0 H7.5 L3.75 4Z" fill="#8f8f8f"/></svg>
<div class="t" style="left:416.5px;top:574.00px;font-size:10.4px;line-height:10.4px;color:#000000;font-weight:700;width:50px;text-align:center;transform:scaleX(1.28);transform-origin:50% 0;">3</div>
<div class="t" style="left:596.75px;top:574.00px;font-size:10.35px;line-height:10.35px;color:#333333;width:54px;text-align:center;transform:scaleX(1.15);transform-origin:50% 0;">2</div>
<div class="t" style="left:871.75px;top:574.00px;font-size:10.35px;line-height:10.35px;color:#333333;width:54px;text-align:center;">1</div>
<div class="t" style="left:43.37px;top:593.00px;font-size:10.35px;line-height:10.35px;color:#333333;transform:scaleX(1.1216);transform-origin:0 0;">НН ОПТ</div>
<div class="t" style="left:165.08px;top:593.00px;font-size:10.35px;line-height:10.35px;color:#333333;transform:scaleX(1.1766);transform-origin:0 0;">Вуколов Владислав Алексеевич</div>
<svg style="left:383.25px;top:594.0px" width="7.5" height="4" viewBox="0 0 7.5 4"><path d="M0 0 H7.5 L3.75 4Z" fill="#8f8f8f"/></svg>
<div class="t" style="left:416.5px;top:593.00px;font-size:10.4px;line-height:10.4px;color:#000000;font-weight:700;width:50px;text-align:center;transform:scaleX(1.28);transform-origin:50% 0;">0</div>
<div class="t" style="left:43.37px;top:612.00px;font-size:10.35px;line-height:10.35px;color:#333333;transform:scaleX(1.1216);transform-origin:0 0;">НН ОПТ</div>
<div class="t" style="left:165.05px;top:612.00px;font-size:10.35px;line-height:10.35px;color:#333333;transform:scaleX(1.2017);transform-origin:0 0;">Рогоженкова Виктория Максимовна</div>
<svg style="left:383.25px;top:613.0px" width="7.5" height="4" viewBox="0 0 7.5 4"><path d="M0 0 H7.5 L3.75 4Z" fill="#8f8f8f"/></svg>
<div class="t" style="left:416.5px;top:612.00px;font-size:10.4px;line-height:10.4px;color:#000000;font-weight:700;width:50px;text-align:center;transform:scaleX(1.22);transform-origin:50% 0;">28</div>
<div class="t" style="left:486.75px;top:612.00px;font-size:10.35px;line-height:10.35px;color:#333333;width:54px;text-align:center;transform:scaleX(1.15);transform-origin:50% 0;">4</div>
<div class="t" style="left:541.75px;top:612.00px;font-size:10.35px;line-height:10.35px;color:#333333;width:54px;text-align:center;">1</div>
<div class="t" style="left:596.75px;top:612.00px;font-size:10.35px;line-height:10.35px;color:#333333;width:54px;text-align:center;transform:scaleX(1.15);transform-origin:50% 0;">5</div>
<div class="t" style="left:706.75px;top:612.00px;font-size:10.35px;line-height:10.35px;color:#333333;width:54px;text-align:center;">1</div>
<div class="t" style="left:761.75px;top:612.00px;font-size:10.35px;line-height:10.35px;color:#333333;width:54px;text-align:center;transform:scaleX(1.15);transform-origin:50% 0;">2</div>
<div class="t" style="left:816.75px;top:612.00px;font-size:10.35px;line-height:10.35px;color:#333333;width:54px;text-align:center;">1</div>
<div class="t" style="left:871.75px;top:612.00px;font-size:10.35px;line-height:10.35px;color:#333333;width:54px;text-align:center;transform:scaleX(1.15);transform-origin:50% 0;">2</div>
<div class="t" style="left:926.75px;top:612.00px;font-size:10.35px;line-height:10.35px;color:#333333;width:54px;text-align:center;transform:scaleX(1.15);transform-origin:50% 0;">2</div>
<div class="t" style="left:1036.75px;top:612.00px;font-size:10.35px;line-height:10.35px;color:#333333;width:54px;text-align:center;transform:scaleX(1.15);transform-origin:50% 0;">4</div>
<div class="t" style="left:1091.75px;top:612.00px;font-size:10.35px;line-height:10.35px;color:#333333;width:54px;text-align:center;transform:scaleX(1.15);transform-origin:50% 0;">2</div>
<div class="t" style="left:1146.75px;top:612.00px;font-size:10.35px;line-height:10.35px;color:#333333;width:54px;text-align:center;transform:scaleX(1.15);transform-origin:50% 0;">4</div>
<div class="t" style="left:43.37px;top:631.00px;font-size:10.35px;line-height:10.35px;color:#333333;transform:scaleX(1.1216);transform-origin:0 0;">НН ОПТ</div>
<div class="t" style="left:165.1px;top:631.00px;font-size:10.35px;line-height:10.35px;color:#333333;transform:scaleX(1.1414);transform-origin:0 0;">Балова Татьяна Евгеньевна</div>
<svg style="left:383.25px;top:632.0px" width="7.5" height="4" viewBox="0 0 7.5 4"><path d="M0 0 H7.5 L3.75 4Z" fill="#8f8f8f"/></svg>
<div class="t" style="left:416.5px;top:631.00px;font-size:10.4px;line-height:10.4px;color:#000000;font-weight:700;width:50px;text-align:center;transform:scaleX(1.1);transform-origin:50% 0;">18</div>
<div class="t" style="left:486.75px;top:631.00px;font-size:10.35px;line-height:10.35px;color:#333333;width:54px;text-align:center;">1</div>
<div class="t" style="left:596.75px;top:631.00px;font-size:10.35px;line-height:10.35px;color:#333333;width:54px;text-align:center;transform:scaleX(1.15);transform-origin:50% 0;">2</div>
<div class="t" style="left:706.75px;top:631.00px;font-size:10.35px;line-height:10.35px;color:#333333;width:54px;text-align:center;">1</div>
<div class="t" style="left:761.75px;top:631.00px;font-size:10.35px;line-height:10.35px;color:#333333;width:54px;text-align:center;transform:scaleX(1.15);transform-origin:50% 0;">2</div>
<div class="t" style="left:871.75px;top:631.00px;font-size:10.35px;line-height:10.35px;color:#333333;width:54px;text-align:center;transform:scaleX(1.15);transform-origin:50% 0;">2</div>
<div class="t" style="left:926.75px;top:631.00px;font-size:10.35px;line-height:10.35px;color:#333333;width:54px;text-align:center;transform:scaleX(1.15);transform-origin:50% 0;">4</div>
<div class="t" style="left:981.75px;top:631.00px;font-size:10.35px;line-height:10.35px;color:#333333;width:54px;text-align:center;transform:scaleX(1.15);transform-origin:50% 0;">2</div>
<div class="t" style="left:1091.75px;top:631.00px;font-size:10.35px;line-height:10.35px;color:#333333;width:54px;text-align:center;">1</div>
<div class="t" style="left:1146.75px;top:631.00px;font-size:10.35px;line-height:10.35px;color:#333333;width:54px;text-align:center;transform:scaleX(1.15);transform-origin:50% 0;">3</div>
<div style="left:40px;top:529px;width:1217px;height:1px;background:#9e9e9e;"></div>
<div style="left:40px;top:548px;width:1217px;height:1px;background:#9e9e9e;"></div>
<div style="left:40px;top:643px;width:1217px;height:1px;background:#bdbdbd;"></div>
<div style="left:162px;top:434px;width:235px;height:1px;background:#2e5e3e;"></div>
<div style="left:162px;top:434px;width:1px;height:211px;background:#2e5e3e;"></div>
<div style="left:396px;top:434px;width:1px;height:211px;background:#2e5e3e;"></div>
<div style="left:40px;top:149px;width:1px;height:19px;background:#2f5583;"></div>
<div style="left:161px;top:149px;width:1px;height:19px;background:#2f5583;"></div>
<div style="left:40px;top:167px;width:118px;height:1px;background:#2f5583;"></div>
<div style="left:159px;top:165px;width:7px;height:7px;border-radius:50%;background:#1a56cf;box-shadow:0 0 0 1px #fff;"></div>
</body></html>
